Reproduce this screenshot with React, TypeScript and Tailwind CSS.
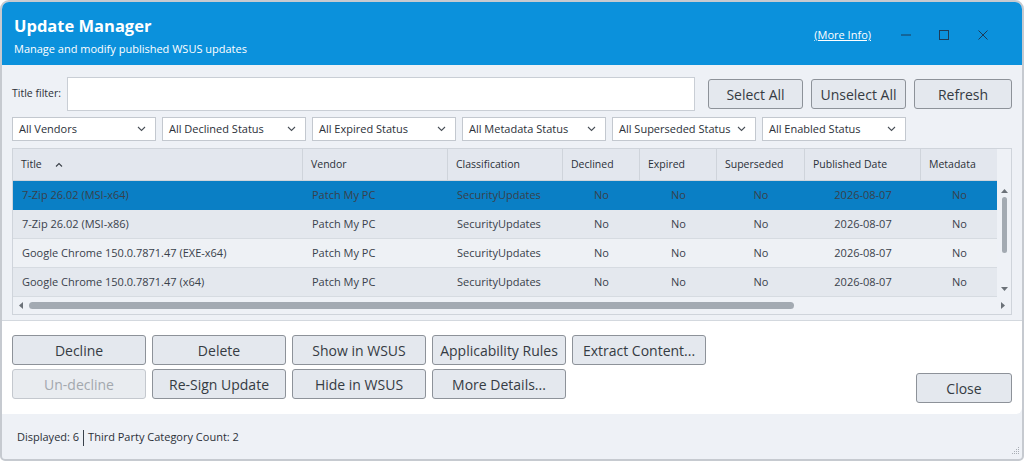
import React from 'react';

const font = { fontFamily: '"Segoe UI", "Open Sans", "Noto Sans", sans-serif' };

const filters = [
  'All Vendors',
  'All Declined Status',
  'All Expired Status',
  'All Metadata Status',
  'All Superseded Status',
  'All Enabled Status',
];

const columns = [
  { label: 'Title', width: 'w-[290px]', align: 'left', sort: true },
  { label: 'Vendor', width: 'w-[145px]', align: 'left' },
  { label: 'Classification', width: 'w-[115px]', align: 'left' },
  { label: 'Declined', width: 'w-[77px]', align: 'center' },
  { label: 'Expired', width: 'w-[77px]', align: 'center' },
  { label: 'Superseded', width: 'w-[88px]', align: 'center' },
  { label: 'Published Date', width: 'w-[116px]', align: 'center' },
  { label: 'Metadata', width: 'w-[77px]', align: 'center' },
];

const rows = [
  '7-Zip 26.02 (MSI-x64)',
  '7-Zip 26.02 (MSI-x86)',
  'Google Chrome 150.0.7871.47 (EXE-x64)',
  'Google Chrome 150.0.7871.47 (x64)',
];

function Chevron() {
  return (
    <svg width="9" height="6" viewBox="0 0 9 6" className="shrink-0">
      <path d="M1 1l3.5 3.5L8 1" fill="none" stroke="#4a5058" strokeWidth="1.1" />
    </svg>
  );
}

function Btn({ children, className = '', disabled = false }: { children: React.ReactNode; className?: string; disabled?: boolean }) {
  return (
    <button
      className={`h-[30px] rounded-[3px] border text-[14px] flex items-center justify-center ${
        disabled ? 'border-[#c4c8ce] bg-[#e9ecf0] text-[#a3a8ae]' : 'border-[#8d9299] bg-[#e4e8ee] text-[#353b43]'
      } ${className}`}
    >
      {children}
    </button>
  );
}

export default function App() {
  return (
    <div className="w-[1024px] h-[461px] bg-white overflow-hidden text-[#2b3038]" style={font}>
      <div className="w-full h-full flex flex-col rounded-t-[9px] rounded-b-[5px] border-2 border-[#c6cad0] overflow-hidden bg-[#eef1f6]">
        {/* header */}
        <div className="h-[63px] bg-[#0b91dc] flex shrink-0">
          <div className="flex-1 pl-[12px] pt-[14px]">
            <div className="text-[16.5px] font-bold text-white leading-[20px]">Update Manager</div>
            <div className="text-[11px] text-white leading-[14px] mt-[6px]">Manage and modify published WSUS updates</div>
          </div>
          <div className="flex items-start pt-[24px]">
            <span className="text-[11px] text-white underline mt-[1px] mr-[29px]">(More Info)</span>
            <div className="flex items-center h-[18px]">
              <svg width="12" height="12" viewBox="0 0 12 12" className="mr-[26px]">
                <path d="M1 6h10" stroke="#1d3b58" strokeWidth="1" />
              </svg>
              <svg width="12" height="12" viewBox="0 0 12 12" className="mr-[27px]">
                <rect x="1.5" y="1.5" width="9" height="9" fill="none" stroke="#1d3b58" strokeWidth="1" />
              </svg>
              <svg width="12" height="12" viewBox="0 0 12 12" className="mr-[33px]">
                <path d="M1.5 1.5l9 9M10.5 1.5l-9 9" stroke="#1d3b58" strokeWidth="1" />
              </svg>
            </div>
          </div>
        </div>

        {/* filters */}
        <div className="px-[10px] pt-[12px] shrink-0">
          <div className="flex items-center">
            <span className="text-[10.5px] w-[55px] shrink-0">Title filter:</span>
            <input className="h-[34px] w-[628px] bg-white border border-[#c9ced5] outline-none" />
            <div className="flex gap-[8px] ml-[13px]">
              <Btn className="w-[95px]">Select All</Btn>
              <Btn className="w-[95px]">Unselect All</Btn>
              <Btn className="w-[98px]">Refresh</Btn>
            </div>
          </div>
          <div className="flex gap-[6px] mt-[6px]">
            {filters.map((f) => (
              <div key={f} className="w-[144px] h-[24px] bg-white border border-[#c3c8cf] flex items-center justify-between pl-[6px] pr-[9px] text-[11px]">
                <span>{f}</span>
                <Chevron />
              </div>
            ))}
          </div>
        </div>

        {/* grid */}
        <div className="mx-[10px] mt-[7px] h-[167px] border border-[#cfd4db] bg-[#eef1f6] flex flex-col shrink-0">
          <div className="flex flex-1 min-h-0">
            <div className="w-[984px] overflow-hidden">
              <div className="flex h-[32px] bg-[#e3e7ee] border-b border-[#cfd4db] w-max">
                {columns.map((c) => (
                  <div key={c.label} className={`${c.width} shrink-0 flex items-center px-[8px] text-[10.5px] border-r border-[#cfd4db]`}>
                    <span>{c.label}</span>
                    {c.sort && (
                      <svg width="8" height="6" viewBox="0 0 8 6" className="ml-[13px]">
                        <path d="M1 4.5L4 1.5 7 4.5" fill="none" stroke="#3a4048" strokeWidth="1.1" />
                      </svg>
                    )}
                  </div>
                ))}
              </div>
              {rows.map((r, i) => (
                <div
                  key={r}
                  className={`flex h-[29px] w-max border-b ${
                    i === 0 ? 'bg-[#0a7fc5] border-[#0a7fc5]' : i % 2 === 1 ? 'bg-[#e4e8ee] border-[#d6dbe1]' : 'bg-[#eef1f5] border-[#d6dbe1]'
                  }`}
                >
                  {columns.map((c, j) => {
                    const val = j === 0 ? r : j === 1 ? 'Patch My PC' : j === 2 ? 'SecurityUpdates' : j === 6 ? '2026-08-07' : 'No';
                    return (
                      <div
                        key={c.label}
                        className={`${c.width} shrink-0 flex items-center px-[9px] text-[11px] text-[#39414b] ${
                          c.align === 'center' ? 'justify-center' : ''
                        }`}
                      >
                        {val}
                      </div>
                    );
                  })}
                </div>
              ))}
            </div>
            {/* vertical scrollbar */}
            <div className="w-[14px] flex flex-col items-center pt-[40px] pb-[6px]">
              <svg width="7" height="4" viewBox="0 0 7 4">
                <path d="M0 4L3.5 0 7 4z" fill="#6b7178" />
              </svg>
              <div className="w-[5px] h-[56px] rounded-full bg-[#a3aab2] mt-[4px]" />
              <div className="flex-1" />
              <svg width="7" height="4" viewBox="0 0 7 4">
                <path d="M0 0L3.5 4 7 0z" fill="#6b7178" />
              </svg>
            </div>
          </div>
          {/* horizontal scrollbar */}
          <div className="h-[17px] flex items-center pl-[6px] pr-[6px] shrink-0">
            <svg width="4" height="7" viewBox="0 0 4 7">
              <path d="M4 0L0 3.5 4 7z" fill="#6b7178" />
            </svg>
            <div className="w-[765px] h-[7px] rounded-full bg-[#a3aab2] ml-[6px]" />
            <div className="flex-1" />
            <svg width="4" height="7" viewBox="0 0 4 7">
              <path d="M0 0L4 3.5 0 7z" fill="#6b7178" />
            </svg>
          </div>
        </div>

        {/* actions */}
        <div className="mt-[5px] h-[94px] bg-white border-t border-[#d3d8de] rounded-br-[6px] flex shrink-0 px-[10px] pt-[14px]">
          <div className="flex flex-col gap-[4px]">
            <div className="flex gap-[6px]">
              <Btn className="w-[134px]">Decline</Btn>
              <Btn className="w-[134px]">Delete</Btn>
              <Btn className="w-[134px]">Show in WSUS</Btn>
              <Btn className="w-[134px]">Applicability Rules</Btn>
              <Btn className="w-[134px]">Extract Content...</Btn>
            </div>
            <div className="flex gap-[6px]">
              <Btn className="w-[134px]" disabled>Un-decline</Btn>
              <Btn className="w-[134px]">Re-Sign Update</Btn>
              <Btn className="w-[134px]">Hide in WSUS</Btn>
              <Btn className="w-[134px]">More Details...</Btn>
            </div>
          </div>
          <div className="flex-1" />
          <Btn className="w-[96px] mt-[38px]">Close</Btn>
        </div>

        {/* status */}
        <div className="flex-1 flex items-center pl-[15px] pt-[2px] text-[11px] relative">
          <span>Displayed: 6</span>
          <span className="mx-[4px] h-[16px] border-l border-[#39414b]" />
          <span>Third Party Category Count: 2</span>
          <svg width="10" height="10" viewBox="0 0 10 10" className="absolute right-[2px] bottom-[2px]">
            <g fill="#a9aeb5">
              <rect x="8" y="0" width="1" height="1" />
              <rect x="6" y="2" width="1" height="1" />
              <rect x="8" y="2" width="1" height="1" />
              <rect x="4" y="4" width="1" height="1" />
              <rect x="6" y="4" width="1" height="1" />
              <rect x="8" y="4" width="1" height="1" />
              <rect x="2" y="6" width="1" height="1" />
              <rect x="4" y="6" width="1" height="1" />
              <rect x="6" y="6" width="1" height="1" />
              <rect x="8" y="6" width="1" height="1" />
            </g>
          </svg>
        </div>
      </div>
    </div>
  );
}
